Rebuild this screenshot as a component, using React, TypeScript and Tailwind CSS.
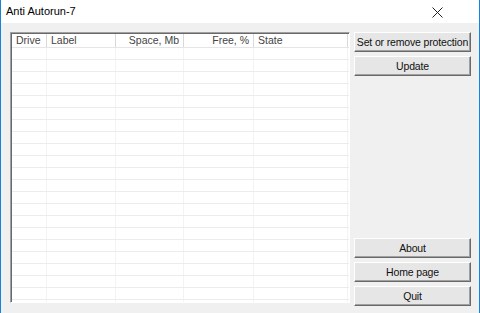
import React from "react";

const cols = [
  { label: "Drive", w: 35, align: "left" },
  { label: "Label", w: 69, align: "left" },
  { label: "Space, Mb", w: 68, align: "right" },
  { label: "Free, %", w: 70, align: "right" },
  { label: "State", w: 94, align: "left" },
];

function Btn({ children }: { children: React.ReactNode }) {
  return (
    <div className="h-[20px] w-[117px] bg-[#e6e6e6] border border-t-white border-l-white border-b-[#696969] border-r-[#696969] shadow-[inset_-1px_-1px_0_#a0a0a0] flex items-center justify-center text-[10.5px] text-[#111] leading-none whitespace-nowrap tracking-[-0.15px]">
      {children}
    </div>
  );
}

export default function App() {
  const rows = Array.from({ length: 22 });
  return (
    <div
      className="w-[480px] h-[313px] flex flex-col bg-white border-x border-[#1883d7] overflow-hidden"
      style={{ fontFamily: "'Liberation Sans', Arial, sans-serif" }}
    >
      <div className="h-[23px] flex items-center justify-between pl-[5px] pr-[36px] shrink-0">
        <span className="text-[11px] text-black">Anti Autorun-7</span>
        <svg width="11" height="11" viewBox="0 0 11 11" className="mt-[1px]">
          <path d="M0.5 0.5 L10.5 10.5 M10.5 0.5 L0.5 10.5" stroke="#222" strokeWidth="1" />
        </svg>
      </div>
      <div className="flex-1 bg-[#f0f0f0] flex pl-[9px] pt-[9px] pb-[7px] gap-[4px]">
        <div className="w-[340px] h-[271px] bg-white border border-t-[#a0a0a0] border-l-[#a0a0a0] border-b-white border-r-white shadow-[inset_1px_1px_0_#696969] overflow-hidden pl-[1px] pt-[1px]">
          <div className="flex h-[14px] border-b border-[#e5e5e5] text-[10.5px] text-[#444] leading-none">
            {cols.map((c, i) => (
              <div
                key={i}
                className={`h-full flex items-center px-[4px] border-r border-[#d9d9d9] whitespace-nowrap ${c.align === "right" ? "justify-end" : "justify-start"}`}
                style={{ width: c.w }}
              >
                {c.label}
              </div>
            ))}
          </div>
          <div className="flex flex-col">
            {rows.map((_, r) => (
              <div key={r} className="flex h-[12px] border-b border-[#ececec]">
                {cols.map((c, i) => (
                  <div key={i} className="h-full border-r border-[#f3f3f3]" style={{ width: c.w }} />
                ))}
              </div>
            ))}
          </div>
        </div>
        <div className="flex flex-col w-[117px]">
          <Btn>Set or remove protection</Btn>
          <div className="h-[4px]" />
          <Btn>Update</Btn>
          <div className="flex-1" />
          <Btn>About</Btn>
          <div className="h-[4px]" />
          <Btn>Home page</Btn>
          <div className="h-[4px]" />
          <Btn>Quit</Btn>
        </div>
      </div>
    </div>
  );
}
